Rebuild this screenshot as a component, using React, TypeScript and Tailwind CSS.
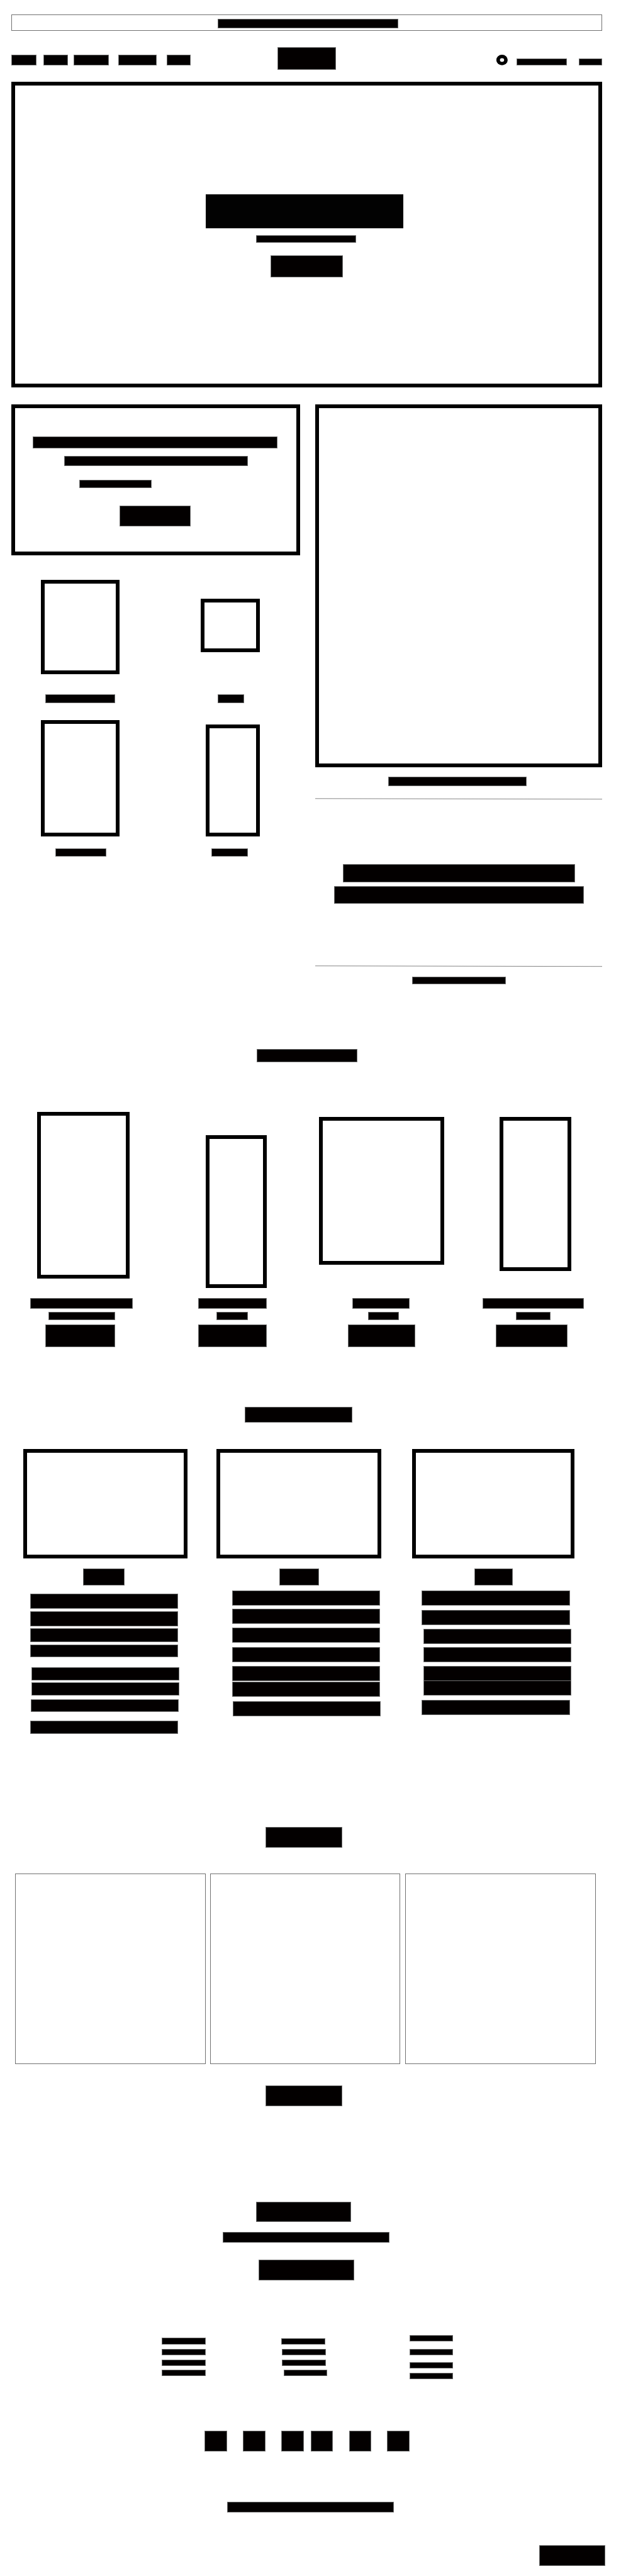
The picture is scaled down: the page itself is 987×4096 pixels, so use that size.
import { clsx } from "clsx";

function Bar({ className }: { className: string }) {
  return <div className={clsx("shrink-0 border border-[#707070] bg-[#030000]", className)} />;
}

function Frame({ className, children }: { className: string; children?: React.ReactNode }) {
  return <div className={clsx("shrink-0 border-6 border-black bg-white", className)}>{children}</div>;
}

function Rule({ className }: { className: string }) {
  return (
    <svg className={clsx("block h-[3px] w-[456px]", className)} viewBox="0 0 456 3" fill="none">
      <line x1="0" y1="0.8" x2="456" y2="1.7" stroke="#707070" strokeWidth="0.85" />
    </svg>
  );
}

function Header() {
  return (
    <header>
      <div className="ml-[18px] h-[26px] w-[939px] border border-[#707070] pt-[6px]">
        <Bar className="ml-[327px] h-[15px] w-[287px]" />
      </div>
      <nav className="mt-[26px] flex h-[36px] items-start pl-[18px]">
        <Bar className="mt-[12px] h-[17px] w-[40px]" />
        <Bar className="mt-[12px] ml-[11px] h-[17px] w-[39px]" />
        <Bar className="mt-[12px] ml-[9px] h-[17px] w-[56px]" />
        <Bar className="mt-[12px] ml-[15px] h-[17px] w-[61px]" />
        <Bar className="mt-[12px] ml-[16px] h-[17px] w-[38px]" />
        <Bar className="ml-[138px] h-[36px] w-[93px]" />
        <svg className="mt-[12px] ml-[255px] h-[17px] w-[18px]" viewBox="0 0 18 17">
          <ellipse cx="8.9" cy="8.4" rx="9" ry="8.4" fill="#000" />
          <ellipse cx="8.9" cy="8.4" rx="3.3" ry="2.8" fill="#fff" />
        </svg>
        <Bar className="mt-[18px] ml-[14px] h-[11px] w-[80px]" />
        <Bar className="mt-[18px] ml-[19px] h-[11px] w-[37px]" />
      </nav>
    </header>
  );
}

function Hero() {
  return (
    <Frame className="mt-[19px] ml-[18px] h-[486px] w-[939px]">
      <div className="ml-[303px] h-[54px] w-[314px] bg-[#020202] mt-[173px]" />
      <Bar className="mt-[11px] ml-[383px] h-[12px] w-[159px]" />
      <Bar className="mt-[20px] ml-[406px] h-[35px] w-[115px]" />
    </Frame>
  );
}

function Features() {
  return (
    <div className="mt-[27px] flex h-[922px] pl-[18px]">
      <div className="w-[459px]">
        <Frame className="h-[240px] w-[459px] pt-[45px]">
          <Bar className="ml-[28px] h-[19px] w-[389px]" />
          <Bar className="mt-[12px] ml-[78px] h-[16px] w-[292px]" />
          <Bar className="mt-[22px] ml-[102px] h-[13px] w-[115px]" />
          <Bar className="mt-[28px] ml-[166px] h-[33px] w-[113px]" />
        </Frame>
        <div className="mt-[39px] flex">
          <Frame className="ml-[47px] h-[150px] w-[125px]" />
          <Frame className="mt-[30px] ml-[129px] h-[85px] w-[94px]" />
        </div>
        <div className="mt-[32px] flex">
          <Bar className="ml-[54px] h-[14px] w-[111px]" />
          <Bar className="ml-[163px] h-[14px] w-[42px]" />
        </div>
        <div className="mt-[27px] flex items-end">
          <Frame className="ml-[47px] h-[185px] w-[125px]" />
          <Frame className="ml-[137px] h-[178px] w-[86px]" />
        </div>
        <div className="mt-[19px] flex">
          <Bar className="ml-[70px] h-[13px] w-[81px]" />
          <Bar className="ml-[167px] h-[13px] w-[58px]" />
        </div>
      </div>
      <div className="ml-[24px] w-[456px]">
        <Frame className="h-[577px] w-[456px]" />
        <Bar className="mt-[15px] ml-[116px] h-[15px] w-[220px]" />
        <Rule className="mt-[19px]" />
        <Bar className="mt-[102px] ml-[44px] h-[29px] w-[369px]" />
        <Bar className="mt-[6px] ml-[30px] h-[28px] w-[397px]" />
        <Rule className="mt-[98px]" />
        <Bar className="mt-[15px] ml-[154px] h-[12px] w-[149px]" />
      </div>
    </div>
  );
}

function Products() {
  return (
    <section className="mt-[103px]">
      <Bar className="ml-[408px] h-[21px] w-[160px]" />
      <div className="mt-[79px] flex h-[280px] items-start">
        <Frame className="ml-[59px] h-[265px] w-[147px]" />
        <Frame className="mt-[37px] ml-[121px] h-[243px] w-[97px]" />
        <Frame className="mt-[8px] ml-[83px] h-[235px] w-[199px]" />
        <Frame className="mt-[8px] ml-[88px] h-[245px] w-[114px]" />
      </div>
      <div className="mt-[16px] flex">
        <Bar className="ml-[48px] h-[17px] w-[163px]" />
        <Bar className="ml-[104px] h-[17px] w-[109px]" />
        <Bar className="ml-[136px] h-[17px] w-[91px]" />
        <Bar className="ml-[116px] h-[17px] w-[161px]" />
      </div>
      <div className="mt-[5px] flex">
        <Bar className="ml-[77px] h-[13px] w-[106px]" />
        <Bar className="ml-[161px] h-[13px] w-[50px]" />
        <Bar className="ml-[191px] h-[13px] w-[49px]" />
        <Bar className="ml-[186px] h-[13px] w-[55px]" />
      </div>
      <div className="mt-[7px] flex">
        <Bar className="ml-[72px] h-[36px] w-[111px]" />
        <Bar className="ml-[132px] h-[36px] w-[109px]" />
        <Bar className="ml-[129px] h-[36px] w-[107px]" />
        <Bar className="ml-[128px] h-[36px] w-[114px]" />
      </div>
    </section>
  );
}

function Articles() {
  return (
    <section className="mt-[95px]">
      <Bar className="ml-[389px] h-[25px] w-[171px]" />
      <div className="mt-[42px] flex h-[453px] pl-[37px]">
        <article className="w-[261px]">
          <Frame className="h-[174px] w-[261px]" />
          <Bar className="mt-[16px] ml-[95px] h-[27px] w-[66px]" />
          <Bar className="mt-[13px] ml-[11px] h-[24px] w-[235px]" />
          <Bar className="mt-[4px] ml-[11px] h-[24px] w-[235px]" />
          <Bar className="mt-[3px] ml-[11px] h-[22px] w-[235px]" />
          <Bar className="mt-[4px] ml-[11px] h-[20px] w-[235px]" />
          <Bar className="mt-[16px] ml-[13px] h-[21px] w-[235px]" />
          <Bar className="mt-[3px] ml-[13px] h-[21px] w-[235px]" />
          <Bar className="mt-[6px] ml-[12px] h-[20px] w-[235px]" />
          <Bar className="mt-[14px] ml-[11px] h-[21px] w-[235px]" />
        </article>
        <article className="ml-[46px] w-[262px]">
          <Frame className="h-[174px] w-[262px]" />
          <Bar className="mt-[16px] ml-[100px] h-[27px] w-[63px]" />
          <Bar className="mt-[8px] ml-[25px] h-[24px] w-[235px]" />
          <Bar className="mt-[5px] ml-[25px] h-[24px] w-[235px]" />
          <Bar className="mt-[6px] ml-[25px] h-[24px] w-[235px]" />
          <Bar className="mt-[7px] ml-[25px] h-[24px] w-[235px]" />
          <Bar className="mt-[6px] ml-[25px] h-[24px] w-[235px]" />
          <Bar className="mt-px ml-[25px] h-[24px] w-[235px]" />
          <Bar className="mt-[7px] ml-[26px] h-[24px] w-[235px]" />
        </article>
        <article className="ml-[49px] w-[258px]">
          <Frame className="h-[174px] w-[258px]" />
          <Bar className="mt-[16px] ml-[99px] h-[27px] w-[61px]" />
          <Bar className="mt-[8px] ml-[15px] h-[24px] w-[236px]" />
          <Bar className="mt-[7px] ml-[15px] h-[24px] w-[236px]" />
          <Bar className="mt-[6px] ml-[18px] h-[24px] w-[235px]" />
          <Bar className="mt-[5px] ml-[18px] h-[24px] w-[235px]" />
          <Bar className="mt-[6px] ml-[18px] h-[24px] w-[235px]" />
          <Bar className="-mt-px ml-[18px] h-[24px] w-[235px]" />
          <Bar className="mt-[7px] ml-[15px] h-[24px] w-[236px]" />
        </article>
      </div>
    </section>
  );
}

function Gallery() {
  return (
    <section className="mt-[148px]">
      <Bar className="ml-[422px] h-[33px] w-[122px]" />
      <div className="mt-[41px] flex pl-[24px]">
        <div className="h-[303px] w-[303px] border border-[#707070]" />
        <div className="ml-[7px] h-[303px] w-[302px] border border-[#707070]" />
        <div className="ml-[8px] h-[303px] w-[303px] border border-[#707070]" />
      </div>
      <Bar className="mt-[34px] ml-[422px] h-[33px] w-[122px]" />
    </section>
  );
}

function Footer() {
  return (
    <footer className="mt-[152px]">
      <Bar className="ml-[407px] h-[32px] w-[151px]" />
      <Bar className="mt-[16px] ml-[354px] h-[17px] w-[265px]" />
      <Bar className="mt-[27px] ml-[411px] h-[33px] w-[152px]" />
      <div className="mt-[87px] flex h-[70px] items-start pl-[257px]">
        <div className="w-[70px] pt-[4px]">
          <Bar className="h-[11px] w-[70px]" />
          <Bar className="mt-[7px] h-[10px] w-[70px]" />
          <Bar className="mt-[7px] h-[10px] w-[70px]" />
          <Bar className="mt-[6px] h-[10px] w-[70px]" />
        </div>
        <div className="ml-[120px] w-[73px] pt-[5px]">
          <Bar className="h-[10px] w-[70px]" />
          <Bar className="mt-[7px] ml-px h-[10px] w-[70px]" />
          <Bar className="mt-[7px] ml-px h-[10px] w-[70px]" />
          <Bar className="mt-[6px] ml-[4px] h-[10px] w-[69px]" />
        </div>
        <div className="ml-[131px] w-[69px]">
          <Bar className="h-[10px] w-[69px]" />
          <Bar className="mt-[12px] h-[10px] w-[69px]" />
          <Bar className="mt-[11px] h-[10px] w-[69px]" />
          <Bar className="mt-[7px] h-[10px] w-[69px]" />
        </div>
      </div>
      <div className="mt-[82px] flex pl-[325px]">
        <Bar className="h-[33px] w-[36px]" />
        <Bar className="ml-[25px] h-[33px] w-[36px]" />
        <Bar className="ml-[25px] h-[33px] w-[36px]" />
        <Bar className="ml-[11px] h-[33px] w-[35px]" />
        <Bar className="ml-[26px] h-[33px] w-[35px]" />
        <Bar className="ml-[25px] h-[33px] w-[36px]" />
      </div>
      <Bar className="mt-[80px] ml-[361px] h-[17px] w-[265px]" />
      <Bar className="mt-[52px] ml-[857px] h-[33px] w-[105px]" />
    </footer>
  );
}

export default function App() {
  return (
    <main className="h-[4096px] w-[987px] overflow-hidden bg-white pt-[23px] font-['Liberation_Sans',sans-serif]">
      <Header />
      <Hero />
      <Features />
      <Products />
      <Articles />
      <Gallery />
      <Footer />
    </main>
  );
}
